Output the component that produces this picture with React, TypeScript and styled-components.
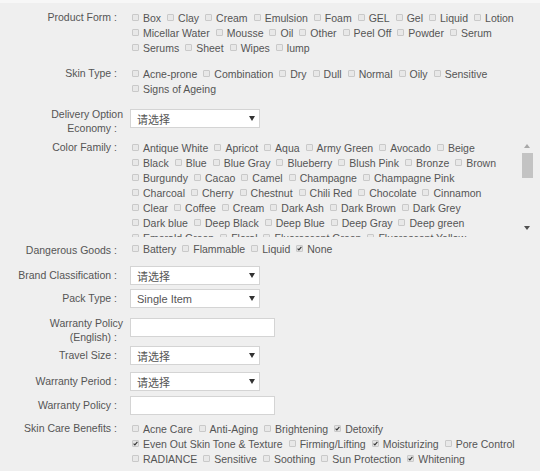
import React from "react";
import styled, { createGlobalStyle } from "styled-components";

const Global = createGlobalStyle`
  html, body { margin: 0; padding: 0; background: #efefef; }
`;

const Page = styled.div`
  width: 540px;
  height: 471px;
  overflow: hidden;
  box-sizing: border-box;
  background: #efefef;
  border-top: 3px solid #f7f7f7;
  padding-top: 7px;
  font-family: "Liberation Sans", Arial, "Noto Sans CJK SC", sans-serif;
  font-size: 10.5px;
  color: #555;
`;

const Row = styled.div<{ $mt: number }>`
  display: grid;
  grid-template-columns: 123px 1fr;
  column-gap: 7px;
  align-items: start;
  margin-top: ${(p) => p.$mt}px;
`;

const Label = styled.div<{ $lh: number; $pt?: number }>`
  text-align: right;
  line-height: ${(p) => p.$lh}px;
  padding-top: ${(p) => p.$pt ?? 0}px;
  color: #555;
  white-space: nowrap;
`;

const Colon = styled.span`
  margin-left: 3px;
  margin-right: 6px;
`;

const Checks = styled.div`
  padding-left: 2px;
  display: flex;
  flex-direction: column;
`;

const Line = styled.div`
  display: flex;
  align-items: center;
  height: 15px;
  white-space: nowrap;
`;

const Item = styled.span`
  display: inline-flex;
  align-items: center;
  margin-right: 6px;
  color: #555;
`;

const Box = styled.span<{ $checked: boolean }>`
  display: inline-flex;
  align-items: center;
  justify-content: center;
  width: 7px;
  height: 7px;
  box-sizing: border-box;
  border: 1px solid #c9c9c9;
  border-radius: 1px;
  background: ${(p) => (p.$checked ? "#e4e4e4" : "#e8e8e8")};
  margin-right: 4px;
  flex-shrink: 0;
`;

const Select = styled.div<{ $mt: number }>`
  position: relative;
  display: flex;
  align-items: center;
  width: 130px;
  height: 19px;
  box-sizing: border-box;
  margin-top: ${(p) => p.$mt}px;
  padding-left: 6px;
  background: #fff;
  border: 1px solid #d4d4d4;
  font-family: "Liberation Sans", Arial, "Noto Sans CJK SC", sans-serif;
  font-size: 11px;
  color: #555;
`;

const Caret = styled.svg`
  position: absolute;
  right: 4px;
  top: 6px;
`;

const TextInput = styled.input<{ $mt: number }>`
  display: block;
  width: 145px;
  height: 19px;
  box-sizing: border-box;
  margin: ${(p) => p.$mt}px 0 0 0;
  padding: 0 4px;
  background: #fff;
  border: 1px solid #d4d4d4;
  outline: none;
`;

const ColorBox = styled.div`
  display: flex;
  width: 403px;
  height: 97px;
`;

const ColorList = styled.div`
  flex: 1;
  overflow: hidden;
  padding-left: 2px;
`;

const Scrollbar = styled.div`
  width: 12px;
  display: flex;
  flex-direction: column;
  align-items: center;
`;

const ScrollBtn = styled.div<{ $mb?: number }>`
  height: 11px;
  width: 12px;
  display: flex;
  align-items: center;
  justify-content: center;
  margin-bottom: ${(p) => p.$mb ?? 0}px;
`;

const Thumb = styled.div`
  width: 11px;
  height: 25px;
  margin-top: 2px;
  background: #c3c3c3;
`;

const Spacer = styled.div`
  flex: 1;
`;

const Check = ({ checked }: { checked: boolean }) => (
  <Box $checked={checked}>
    {checked && (
      <svg width="5" height="5" viewBox="0 0 5 5">
        <path d="M0.6 2.6 L1.9 3.9 L4.4 0.9" stroke="#333" strokeWidth="1.1" fill="none" />
      </svg>
    )}
  </Box>
);

type Opt = string | [string, boolean];

const CheckLines = ({ lines }: { lines: Opt[][] }) => (
  <>
    {lines.map((line, i) => (
      <Line key={i}>
        {line.map((o) => {
          const [name, checked] = typeof o === "string" ? [o, false] : o;
          return (
            <Item key={name}>
              <Check checked={checked} />
              {name}
            </Item>
          );
        })}
      </Line>
    ))}
  </>
);

const Dropdown = ({ value, mt }: { value: string; mt: number }) => (
  <Select $mt={mt}>
    {value}
    <Caret width="6" height="5" viewBox="0 0 6 5">
      <polygon points="0,0 6,0 3,5" fill="#333" />
    </Caret>
  </Select>
);

const productForm: Opt[][] = [
  ["Box", "Clay", "Cream", "Emulsion", "Foam", "GEL", "Gel", "Liquid", "Lotion"],
  ["Micellar Water", "Mousse", "Oil", "Other", "Peel Off", "Powder", "Serum"],
  ["Serums", "Sheet", "Wipes", "lump"],
];

const skinType: Opt[][] = [
  ["Acne-prone", "Combination", "Dry", "Dull", "Normal", "Oily", "Sensitive"],
  ["Signs of Ageing"],
];

const colors: Opt[][] = [
  ["Antique White", "Apricot", "Aqua", "Army Green", "Avocado", "Beige"],
  ["Black", "Blue", "Blue Gray", "Blueberry", "Blush Pink", "Bronze", "Brown"],
  ["Burgundy", "Cacao", "Camel", "Champagne", "Champagne Pink"],
  ["Charcoal", "Cherry", "Chestnut", "Chili Red", "Chocolate", "Cinnamon"],
  ["Clear", "Coffee", "Cream", "Dark Ash", "Dark Brown", "Dark Grey"],
  ["Dark blue", "Deep Black", "Deep Blue", "Deep Gray", "Deep green"],
  ["Emerald Green", "Floral", "Fluorescent Green", "Fluorescent Yellow"],
  ["Fuchsia", "Gold", "Green", "Grey", "Ivory", "Khaki"],
];

const dangerous: Opt[][] = [["Battery", "Flammable", "Liquid", ["None", true]]];

const benefits: Opt[][] = [
  ["Acne Care", "Anti-Aging", "Brightening", ["Detoxify", true]],
  [["Even Out Skin Tone & Texture", true], "Firming/Lifting", ["Moisturizing", true], "Pore Control"],
  ["RADIANCE", "Sensitive", "Soothing", "Sun Protection", ["Whitening", true]],
];

export default function App() {
  return (
    <Page>
      <Global />
      <Row $mt={0}>
        <Label $lh={15}>
          Product Form<Colon>:</Colon>
        </Label>
        <Checks>
          <CheckLines lines={productForm} />
        </Checks>
      </Row>
      <Row $mt={11}>
        <Label $lh={15}>
          Skin Type<Colon>:</Colon>
        </Label>
        <Checks>
          <CheckLines lines={skinType} />
        </Checks>
      </Row>
      <Row $mt={11}>
        <Label $lh={14}>
          Delivery Option
          <br />
          Economy<Colon>:</Colon>
        </Label>
        <Dropdown value="请选择" mt={2} />
      </Row>
      <Row $mt={5}>
        <Label $lh={15}>
          Color Family<Colon>:</Colon>
        </Label>
        <ColorBox>
          <ColorList>
            <CheckLines lines={colors} />
          </ColorList>
          <Scrollbar>
            <ScrollBtn>
              <svg width="6" height="4" viewBox="0 0 6 4">
                <polygon points="0,4 6,4 3,0" fill="#a8a8a8" />
              </svg>
            </ScrollBtn>
            <Thumb />
            <Spacer />
            <ScrollBtn $mb={4}>
              <svg width="6" height="4" viewBox="0 0 6 4">
                <polygon points="0,0 6,0 3,4" fill="#505050" />
              </svg>
            </ScrollBtn>
          </Scrollbar>
        </ColorBox>
      </Row>
      <Row $mt={4}>
        <Label $lh={15} $pt={2}>
          Dangerous Goods<Colon>:</Colon>
        </Label>
        <Checks>
          <CheckLines lines={dangerous} />
        </Checks>
      </Row>
      <Row $mt={8}>
        <Label $lh={19}>
          Brand Classification<Colon>:</Colon>
        </Label>
        <Dropdown value="请选择" mt={0} />
      </Row>
      <Row $mt={4}>
        <Label $lh={19}>
          Pack Type<Colon>:</Colon>
        </Label>
        <Dropdown value="Single Item" mt={0} />
      </Row>
      <Row $mt={8}>
        <Label $lh={14}>
          Warranty Policy
          <br />
          (English)<Colon>:</Colon>
        </Label>
        <TextInput $mt={2} type="text" />
      </Row>
      <Row $mt={2}>
        <Label $lh={19}>
          Travel Size<Colon>:</Colon>
        </Label>
        <Dropdown value="请选择" mt={0} />
      </Row>
      <Row $mt={7}>
        <Label $lh={19}>
          Warranty Period<Colon>:</Colon>
        </Label>
        <Dropdown value="请选择" mt={0} />
      </Row>
      <Row $mt={5}>
        <Label $lh={19}>
          Warranty Policy<Colon>:</Colon>
        </Label>
        <TextInput $mt={0} type="text" />
      </Row>
      <Row $mt={6}>
        <Label $lh={15}>
          Skin Care Benefits<Colon>:</Colon>
        </Label>
        <Checks>
          <CheckLines lines={benefits} />
        </Checks>
      </Row>
    </Page>
  );
}
